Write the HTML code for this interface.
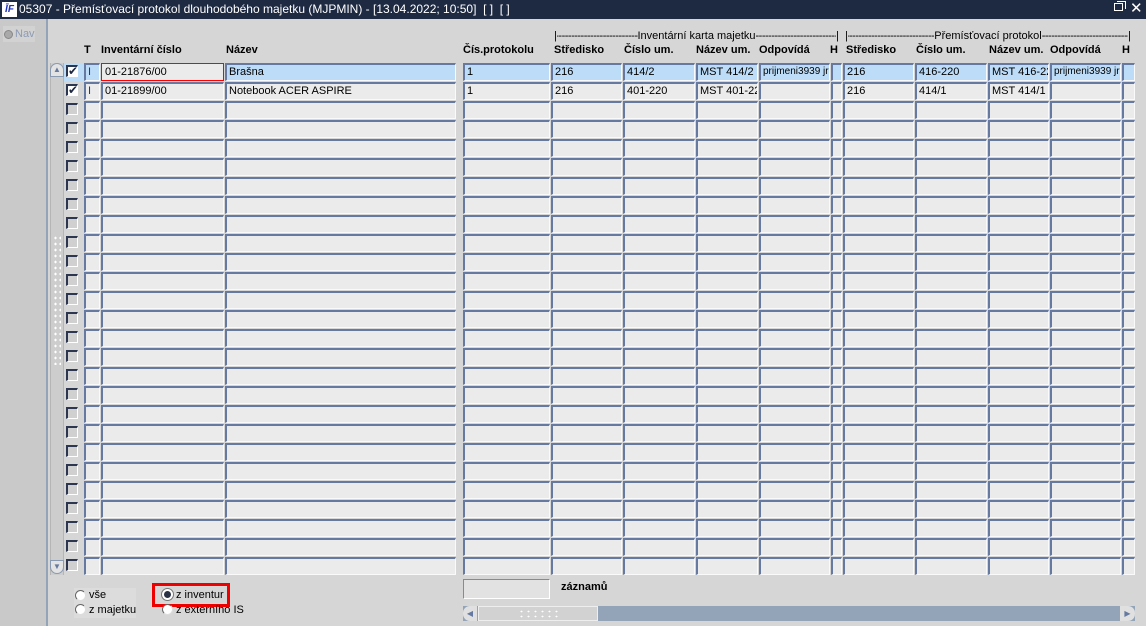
<!DOCTYPE html>
<html><head><meta charset="utf-8">
<style>
*{margin:0;padding:0;box-sizing:border-box}
body{width:1146px;height:626px;overflow:hidden;background:#d6d6d6;font-family:"Liberation Sans",Arial,sans-serif;font-size:11px;color:#000;position:relative}
.a{position:absolute}
#title{left:0;top:0;width:1146px;height:19px;background:#1e2a42;color:#fff;font-size:12px;line-height:19px;padding-left:19px;white-space:nowrap}
#logo{left:2px;top:2px;width:15px;height:15px;background:#fff;color:#1b2fc0;font:bold italic 10px/15px "Liberation Sans",sans-serif;text-align:center}
#left{left:0;top:19px;width:48px;height:607px;background:#c9c9c9;border-right:2px solid #93a3b8}
.c{position:absolute;height:18px;background:#ebebeb;border-top:2px solid #6679a0;border-left:2px solid #6679a0;border-right:1px solid #fafafa;border-bottom:1px solid #fafafa;line-height:14px;padding-left:2px;white-space:nowrap;overflow:hidden}
.s{background:#bcdcf8}
.h{position:absolute;top:44px;font-weight:bold;font-size:11px;white-space:nowrap}
.grp{position:absolute;top:29px;height:14px;display:flex;font-size:11px;white-space:nowrap;line-height:14px}
.grp .d{flex:1;overflow:hidden;letter-spacing:-0.5px}
.grp .dl{direction:rtl}
.cb{position:absolute;width:12px;height:12px;border-top:2px solid #2c3650;border-left:2px solid #2c3650;border-right:1px solid #fff;border-bottom:1px solid #fff;background:#d0d0d0}
.rad{position:absolute;width:11px;height:11px;border-radius:50%;background:#fff;border:1px solid #666;border-right-color:#ddd;border-bottom-color:#ddd}
.lbl{position:absolute;font-size:11px;white-space:nowrap}
</style></head><body>
<div class="a" id="title">05307 - Přemísťovací protokol dlouhodobého majetku (MJPMIN) - [13.04.2022; 10:50]&nbsp; [ ]&nbsp; [ ]</div>
<div class="a" id="logo">ĪF</div>
<div class="a" style="left:1114px;top:3px;width:9px;height:8px;border:1px solid #fff;"></div>
<div class="a" style="left:1117px;top:1px;width:9px;height:8px;border-top:1px solid #fff;border-right:1px solid #fff"></div>
<div class="a" style="left:1130px;top:-1px;color:#fff;font-size:15px">✕</div>
<div class="a" id="left"></div>
<div class="a" style="left:3px;top:26px;width:32px;height:16px;background:#d2d2d2"></div>
<div class="a" style="left:4px;top:30px;width:9px;height:9px;border-radius:50%;background:#a9a9a9;border:1px solid #888"></div>
<div class="a" style="left:15px;top:28px;color:#8d9bb3;font-size:11px">Nav</div>

<div class="h" style="left:84px">T</div>
<div class="h" style="left:101px">Inventární číslo</div>
<div class="h" style="left:226px">Název</div>
<div class="h" style="left:463px">Čís.protokolu</div>
<div class="grp" style="left:554px;width:285px"><span>|</span><span class="d dl">------------------------------------------------------------</span><span>Inventární karta majetku</span><span class="d">------------------------------------------------------------</span><span>|</span></div>
<div class="grp" style="left:845px;width:286px"><span>|</span><span class="d dl">------------------------------------------------------------</span><span>Přemísťovací protokol</span><span class="d">------------------------------------------------------------</span><span>|</span></div>
<div class="h" style="left:554px">Středisko</div>
<div class="h" style="left:624px">Číslo um.</div>
<div class="h" style="left:696px">Název um.</div>
<div class="h" style="left:759px">Odpovídá</div>
<div class="h" style="left:830px">H</div>
<div class="h" style="left:846px">Středisko</div>
<div class="h" style="left:916px">Číslo um.</div>
<div class="h" style="left:989px">Název um.</div>
<div class="h" style="left:1050px">Odpovídá</div>
<div class="h" style="left:1122px">H</div>

<div class="a" style="left:50px;top:63px;width:14px;height:512px;background:#cdcdcd;border-left:1px solid #b5b5b5;border-right:1px solid #b5b5b5"></div>
<div class="a" style="left:50px;top:63px;width:14px;height:14px;border-radius:7px 7px 0 0;border:1px solid #8a9ab0;background:#e3e3e3;color:#6679a0;font-size:8px;text-align:center;line-height:12px">▲</div>
<div class="a" style="left:50px;top:560px;width:14px;height:14px;border-radius:0 0 7px 7px;border:1px solid #8a9ab0;background:#e3e3e3;color:#6679a0;font-size:8px;text-align:center;line-height:12px">▼</div>
<div class="a" style="left:53px;top:235px;width:8px;height:130px;background-image:radial-gradient(#fff 1px,transparent 1.2px);background-size:5px 6px"></div>

<div class="a" style="left:64px;top:63px;width:19px;height:18px;background:#bcdcf8"></div>

<div id="grid"></div>

<div class="cb" style="left:66px;top:65px;background:#fff;font-size:12px;line-height:9px;color:#1c2640">✔</div>
<div class="c s" style="left:84px;top:63px;width:16px;color:#2030a0">I</div>
<div class="a" style="left:101px;top:63px;width:123px;height:18px;border:1px solid #ff0000;background:#ebebeb;padding-left:3px;line-height:16px;white-space:nowrap">01-21876/00</div>
<div class="c s" style="left:225px;top:63px;width:231px">Brašna</div>
<div class="c s" style="left:463px;top:63px;width:87px">1</div>
<div class="c s" style="left:551px;top:63px;width:71px">216</div>
<div class="c s" style="left:623px;top:63px;width:72px">414/2</div>
<div class="c s" style="left:696px;top:63px;width:62px">MST 414/2</div>
<div class="c s" style="left:759px;top:63px;width:71px;font-size:10px">prijmeni3939 jr</div>
<div class="c s" style="left:831px;top:63px;width:11px"></div>
<div class="c s" style="left:843px;top:63px;width:71px">216</div>
<div class="c s" style="left:915px;top:63px;width:72px">416-220</div>
<div class="c s" style="left:988px;top:63px;width:61px">MST 416-22</div>
<div class="c s" style="left:1050px;top:63px;width:71px;font-size:10px">prijmeni3939 jr</div>
<div class="c s" style="left:1122px;top:63px;width:13px"></div>

<div class="cb" style="left:66px;top:84px;background:#fff;font-size:12px;line-height:9px;color:#1c2640">✔</div>
<div class="c" style="left:84px;top:82px;width:16px;color:#2030a0">I</div>
<div class="c" style="left:101px;top:82px;width:123px">01-21899/00</div>
<div class="c" style="left:225px;top:82px;width:231px">Notebook ACER ASPIRE</div>
<div class="c" style="left:463px;top:82px;width:87px">1</div>
<div class="c" style="left:551px;top:82px;width:71px">216</div>
<div class="c" style="left:623px;top:82px;width:72px">401-220</div>
<div class="c" style="left:696px;top:82px;width:62px">MST 401-22</div>
<div class="c" style="left:759px;top:82px;width:71px"></div>
<div class="c" style="left:831px;top:82px;width:11px"></div>
<div class="c" style="left:843px;top:82px;width:71px">216</div>
<div class="c" style="left:915px;top:82px;width:72px">414/1</div>
<div class="c" style="left:988px;top:82px;width:61px">MST 414/1</div>
<div class="c" style="left:1050px;top:82px;width:71px"></div>
<div class="c" style="left:1122px;top:82px;width:13px"></div>

<div class="a" style="left:74px;top:588px;width:62px;height:30px;background:#dcdcdc"></div>
<div class="rad" style="left:75px;top:590px"></div><div class="lbl" style="left:89px;top:589px">vše</div>
<div class="rad" style="left:75px;top:604px"></div><div class="lbl" style="left:89px;top:604px">z majetku</div>
<div class="a" style="left:152px;top:583px;width:78px;height:24px;border:3px solid #ee0000"></div>
<div class="rad" style="left:162px;top:589px;background:#2a3245;border:2px solid #fff;box-shadow:0 0 0 1px #777"></div><div class="lbl" style="left:176px;top:589px">z inventur</div>
<div class="rad" style="left:162px;top:604px"></div><div class="lbl" style="left:176px;top:604px">z externího IS</div>
<div class="a" style="left:463px;top:579px;width:87px;height:20px;border:1px solid #7e8ba3;border-right-color:#fff;border-bottom-color:#fff;background:#e2e2e2"></div>
<div class="lbl" style="left:561px;top:581px;font-weight:bold">záznamů</div>
<div class="a" style="left:463px;top:606px;width:672px;height:15px;background:#94a4b8"></div>
<div class="a" style="left:463px;top:606px;width:14px;height:15px;background:#e0e0e0;border-radius:7px 0 0 7px;color:#6679a0;font-size:8px;line-height:15px;text-align:center">◀</div>
<div class="a" style="left:478px;top:606px;width:120px;height:15px;background:#d2d2d2;border:1px solid #eee"></div>
<div class="a" style="left:518px;top:609px;width:42px;height:10px;background-image:radial-gradient(#fff 1px,transparent 1.2px);background-size:7px 5px"></div>
<div class="a" style="left:1120px;top:606px;width:15px;height:15px;background:#e0e0e0;border-radius:0 7px 7px 0;color:#6679a0;font-size:8px;line-height:15px;text-align:center">▶</div>

<script>
var cols=[[84,16],[101,123],[225,231],[463,87],[551,71],[623,72],[696,62],[759,71],[831,11],[843,71],[915,72],[988,61],[1050,71],[1122,13]];
var h='';
for(var r=2;r<27;r++){var y=63+r*19;
h+='<div class="cb" style="left:66px;top:'+(y+2)+'px"></div>';
for(var i=0;i<cols.length;i++)h+='<div class="c" style="left:'+cols[i][0]+'px;top:'+y+'px;width:'+cols[i][1]+'px"></div>';}
document.getElementById('grid').innerHTML=h;
</script>
</body></html>
